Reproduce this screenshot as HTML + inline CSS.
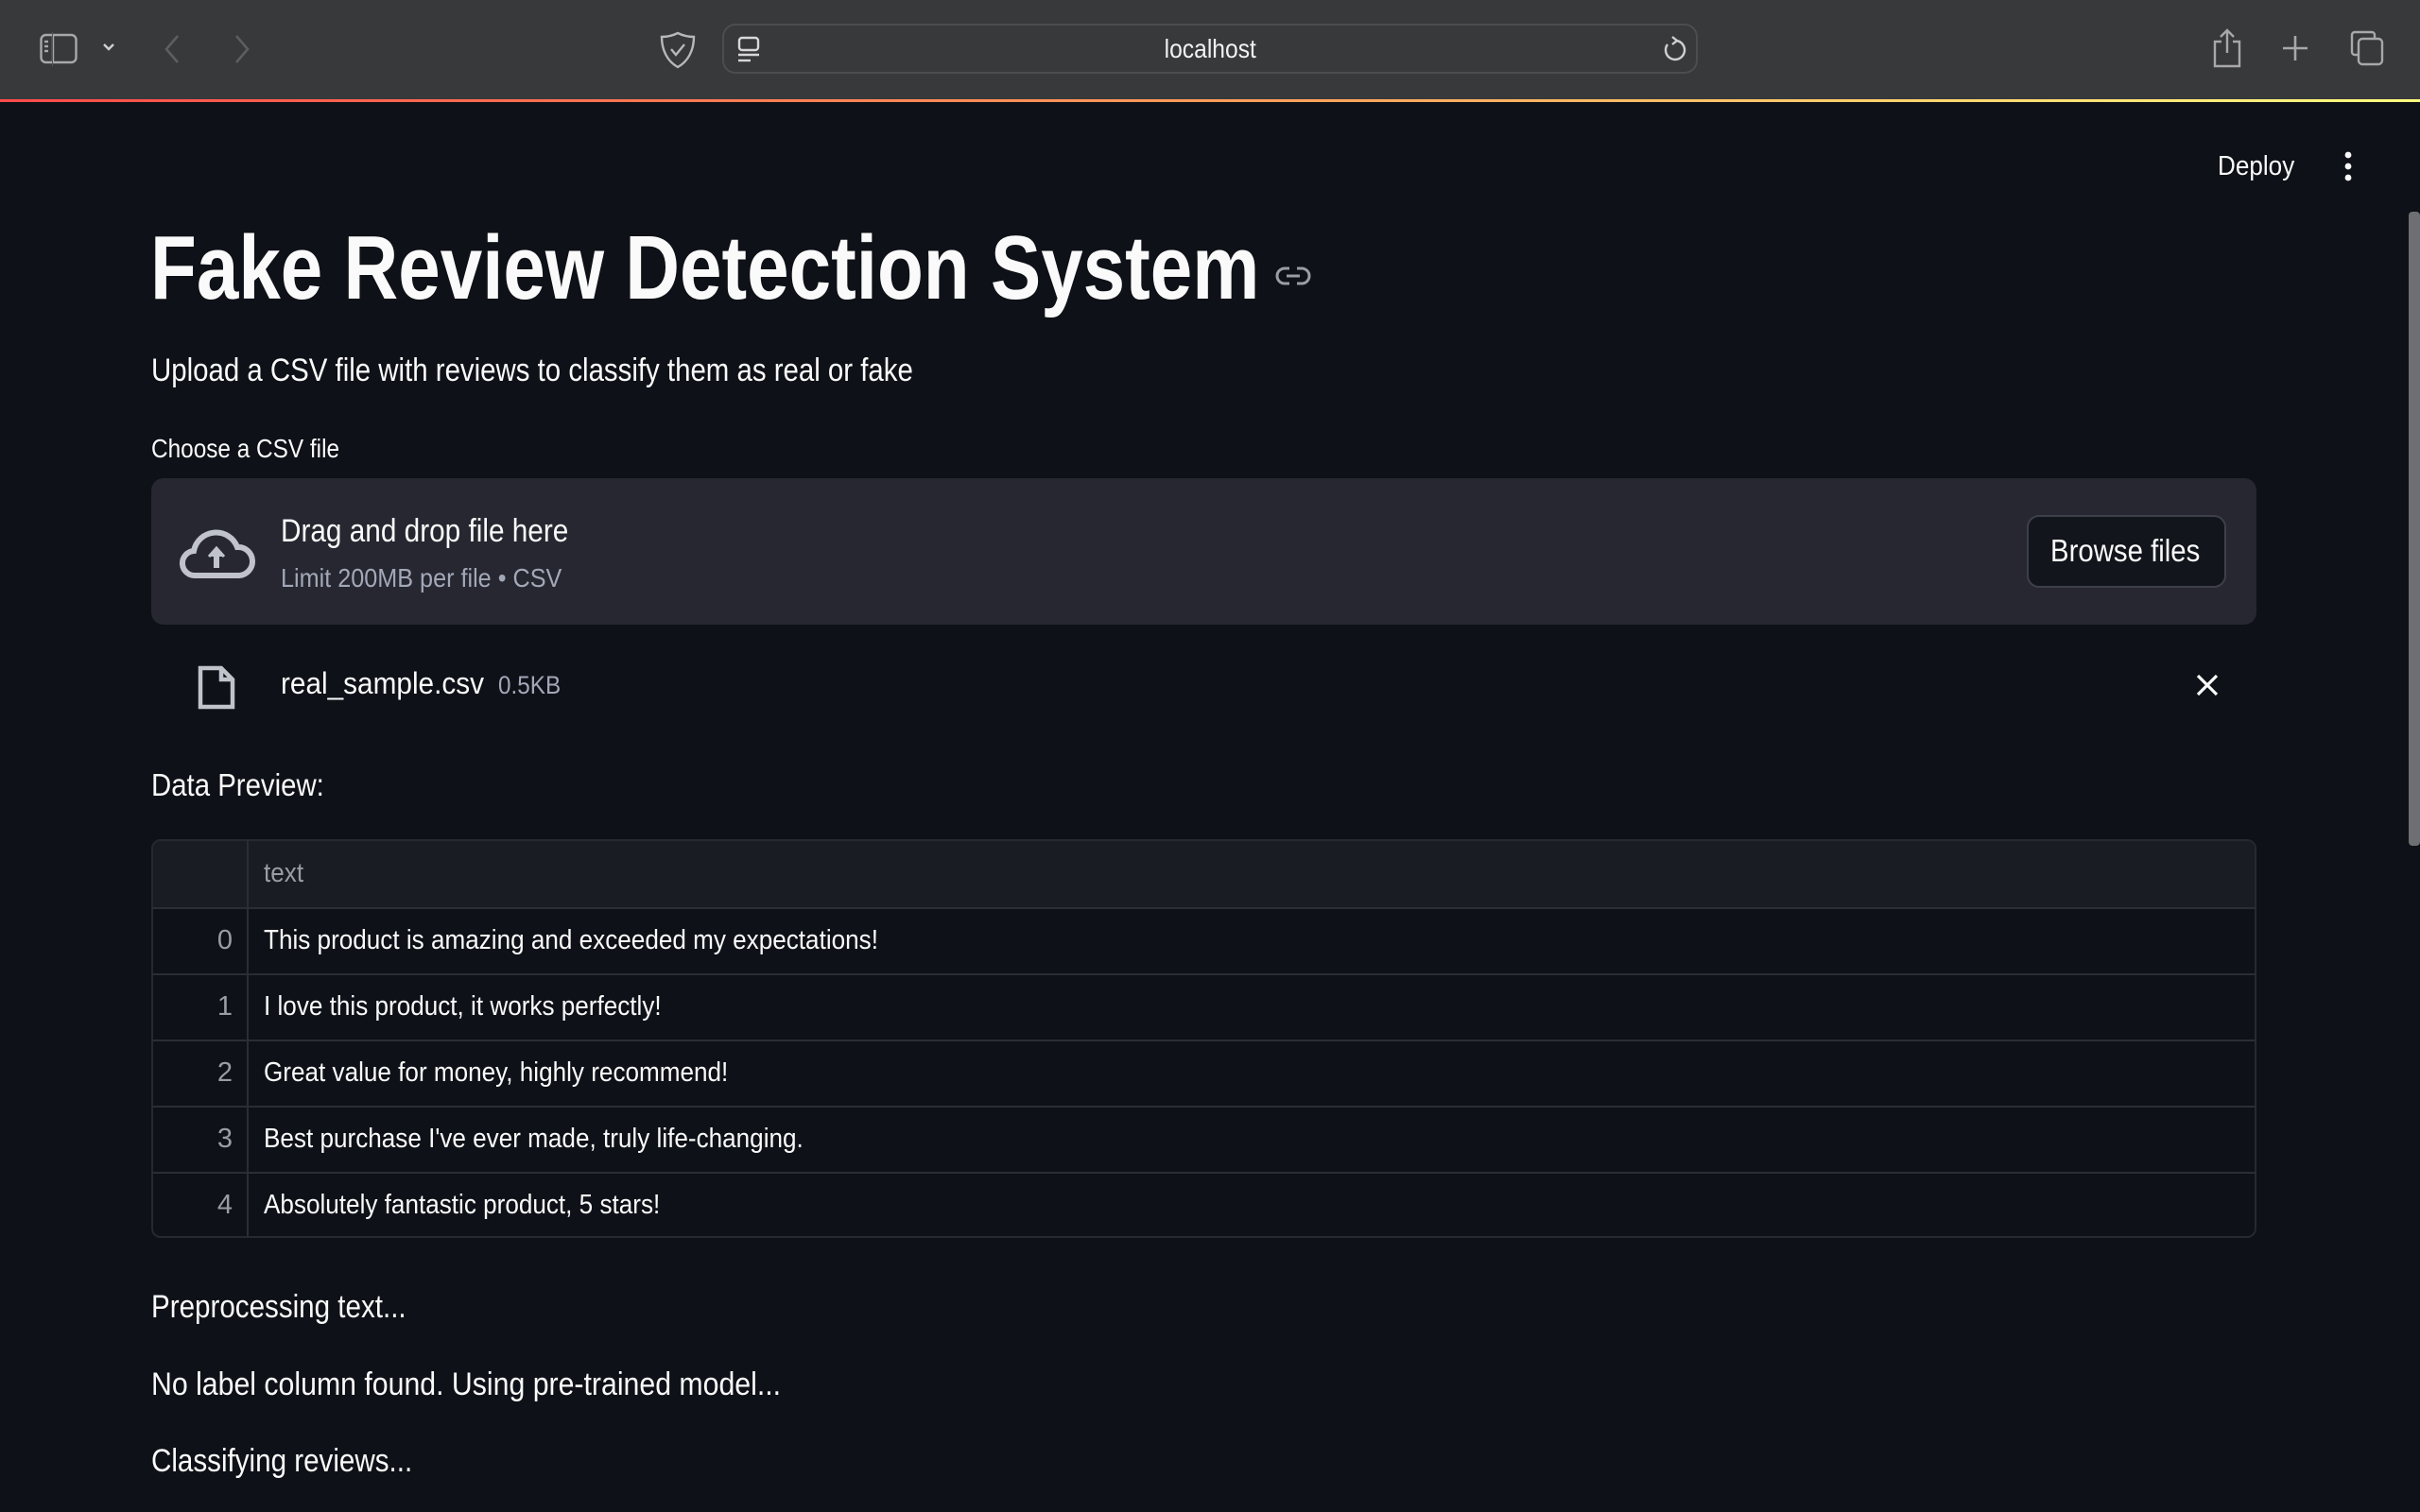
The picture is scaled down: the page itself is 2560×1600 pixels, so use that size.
<!DOCTYPE html>
<html><head><meta charset="utf-8"><style>
*{margin:0;padding:0;box-sizing:border-box}
body{width:2560px;height:1600px;background:#0e1117;overflow:hidden;position:relative;font-family:"Liberation Sans",sans-serif;color:#fafafa}
.a{position:absolute;white-space:nowrap}
.t{display:inline-block;transform:scaleX(.88);transform-origin:left center}
.bar{position:absolute;left:0;top:0;width:2560px;height:105px;background:#38393b}
.grad{position:absolute;left:0;top:105px;width:2560px;height:3px;background:linear-gradient(90deg,#ff4b4b,#ffa45c 55%,#fffd80)}
svg{position:absolute;overflow:visible}
.row{position:absolute;left:160px;width:2227px;height:1px;background:#2b2d36}
.r{font-size:29px;line-height:34px}
.r .t{transform:scaleX(.9)}
</style></head><body>
<div class="bar"></div>
<div class="grad"></div>
<svg style="left:42px;top:35px" width="40" height="32" viewBox="0 0 40 32" fill="none" stroke="#a8a8aa" stroke-width="2.4"><rect x="1.5" y="2" width="37" height="29" rx="5"/><line x1="14" y1="2" x2="14" y2="31"/><line x1="5" y1="9" x2="9" y2="9"/><line x1="5" y1="14" x2="9" y2="14"/><line x1="5" y1="19" x2="9" y2="19"/></svg>
<div class="a" style="left:55px;top:34px;width:1px;height:36px;background:#555"></div>
<svg style="left:108px;top:45px" width="14" height="10" viewBox="0 0 14 10" fill="none" stroke="#d0d0d2" stroke-width="2.4"><path d="M2 2l5 5 5-5"/></svg>
<svg style="left:170px;top:36px" width="24" height="32" viewBox="0 0 24 32" fill="none" stroke="#5d5e60" stroke-width="2.6"><path d="M18 2L6 16l12 14"/></svg>
<svg style="left:244px;top:36px" width="24" height="32" viewBox="0 0 24 32" fill="none" stroke="#5d5e60" stroke-width="2.6"><path d="M6 2l12 14L6 30"/></svg>
<svg style="left:698px;top:33px" width="38" height="40" viewBox="0 0 38 40" fill="none" stroke="#b8b8ba" stroke-width="2.4"><path d="M19 2c6 3 12 4 17 4 0 14-6 26-17 32C8 32 2 20 2 6c5 0 11-1 17-4z"/><path d="M12 19l5 6 9-11"/></svg>
<div class="a" style="left:764px;top:25px;width:1032px;height:53px;border:2px solid #4c4d50;border-radius:14px;background:#38393b"></div>
<svg style="left:780px;top:38px" width="24" height="30" viewBox="0 0 24 30" fill="none" stroke="#d8d8da" stroke-width="2.4"><rect x="2" y="2" width="20" height="13" rx="3"/><line x1="1" y1="20" x2="23" y2="20"/><line x1="1" y1="26" x2="14" y2="26"/></svg>
<div class="a" style="left:1180px;top:33px;width:200px;text-align:center;font-size:28px;line-height:38px;color:#f2f2f2"><span class="t" style="transform-origin:center">localhost</span></div>
<svg style="left:1758px;top:38px" width="26" height="30" viewBox="0 0 26 30" fill="none" stroke="#d0d0d2" stroke-width="2.4"><path d="M15 5a10 10 0 1 1-9 4"/><path d="M11 1l5 4-5 4"/></svg>
<svg style="left:2340px;top:30px" width="32" height="42" viewBox="0 0 32 42" fill="none" stroke="#a8a8aa" stroke-width="2.4"><path d="M10 14H3v26h26V14h-7"/><path d="M16 26V2M9 9l7-7 7 7"/></svg>
<svg style="left:2414px;top:37px" width="28" height="28" viewBox="0 0 28 28" stroke="#a8a8aa" stroke-width="2.6"><path d="M14 1v26M1 14h26"/></svg>
<svg style="left:2486px;top:32px" width="36" height="38" viewBox="0 0 36 38" fill="none" stroke="#a8a8aa" stroke-width="2.4"><path d="M8 26H5a3 3 0 0 1-3-3V5a3 3 0 0 1 3-3h18a3 3 0 0 1 3 3v3"/><rect x="9" y="9" width="25" height="27" rx="4"/></svg>
<div class="a" style="left:2346px;top:156px;font-size:29px;line-height:40px"><span class="t" style="transform:scaleX(.9)">Deploy</span></div>
<svg style="left:2477px;top:160px" width="14" height="32" viewBox="0 0 14 32" fill="#fafafa"><circle cx="7" cy="4" r="3.4"/><circle cx="7" cy="16" r="3.4"/><circle cx="7" cy="28" r="3.4"/></svg>
<div class="a" style="left:2548px;top:224px;width:12px;height:671px;background:#6e6f73;border-radius:4px"></div>
<div class="a" style="left:159px;top:228px;font-size:96px;line-height:112px;font-weight:bold"><span class="t" style="transform:scaleX(.833)">Fake Review Detection System</span></div>
<svg style="left:1350px;top:280px" width="36" height="24" viewBox="0 0 36 24" fill="none" stroke="#9a9ca6" stroke-width="3"><path d="M14 4H9a8 8 0 0 0 0 16h5M22 4h5a8 8 0 0 1 0 16h-5M11 12h14"/></svg>
<div class="a" style="left:160px;top:372px;font-size:34px;line-height:40px"><span class="t" style="transform:scaleX(.865)">Upload a CSV file with reviews to classify them as real or fake</span></div>
<div class="a" style="left:160px;top:458px;font-size:28px;line-height:34px"><span class="t" style="transform:scaleX(.87)">Choose a CSV file</span></div>
<div class="a" style="left:160px;top:506px;width:2227px;height:155px;background:#262730;border-radius:13px"></div>
<svg style="left:191px;top:557px" width="76" height="56" viewBox="0 0 76 56" fill="none" stroke="#c0c2cc" stroke-width="6"><path d="M20 52H16A13 13 0 0 1 14 26 24 24 0 0 1 60 22 15 15 0 0 1 62 52H20z"/><path d="M38 44V26" stroke-width="6"/><path d="M30 32l8-9 8 9" fill="#c0c2cc" stroke-width="3"/></svg>
<div class="a" style="left:297px;top:542px;font-size:34px;line-height:40px"><span class="t" style="transform:scaleX(.875)">Drag and drop file here</span></div>
<div class="a" style="left:297px;top:595px;font-size:28px;line-height:34px;color:#a3a8b8"><span class="t" style="transform:scaleX(.9)">Limit 200MB per file • CSV</span></div>
<div class="a" style="left:2144px;top:545px;width:211px;height:77px;background:#13151c;border:2px solid #3d3f4a;border-radius:13px"></div>
<div class="a" style="left:2169px;top:563px;font-size:33px;line-height:40px"><span class="t" style="transform:scaleX(.89)">Browse files</span></div>
<svg style="left:209px;top:704px" width="40" height="47" viewBox="0 0 40 47" fill="none" stroke="#c0c2cc" stroke-width="4.5"><path d="M3 3h22l12 12v29H3z"/><path d="M25 3v12h12"/></svg>
<div class="a" style="left:297px;top:704px;font-size:32px;line-height:38px"><span class="t" style="transform:scaleX(.93)">real_sample.csv</span></div>
<div class="a" style="left:527px;top:708px;font-size:27px;line-height:34px;color:#a3a8b8"><span class="t" style="transform:scaleX(.9)">0.5KB</span></div>
<svg style="left:2323px;top:713px" width="24" height="24" viewBox="0 0 24 24" stroke="#fafafa" stroke-width="3.2"><path d="M2 2l20 20M22 2L2 22"/></svg>
<div class="a" style="left:160px;top:812px;font-size:33px;line-height:38px"><span class="t" style="transform:scaleX(.89)">Data Preview:</span></div>
<div class="a" style="left:160px;top:888px;width:2227px;height:422px;border:2px solid #272932;border-radius:10px;overflow:hidden"><div style="height:71px;background:#1a1c24"></div></div>
<div class="a" style="left:261px;top:889px;width:2px;height:420px;background:#2b2d36"></div>
<div class="row" style="top:960px;height:2px"></div>
<div class="row" style="top:1030px;height:2px"></div>
<div class="row" style="top:1100px;height:2px"></div>
<div class="row" style="top:1170px;height:2px"></div>
<div class="row" style="top:1240px;height:2px"></div>
<div class="a r" style="left:279px;top:907px;color:#9a9ca6"><span class="t">text</span></div>
<div class="a r" style="left:200px;top:978px;width:46px;text-align:right;color:#9a9ca6">0</div>
<div class="a r" style="left:200px;top:1048px;width:46px;text-align:right;color:#9a9ca6">1</div>
<div class="a r" style="left:200px;top:1118px;width:46px;text-align:right;color:#9a9ca6">2</div>
<div class="a r" style="left:200px;top:1188px;width:46px;text-align:right;color:#9a9ca6">3</div>
<div class="a r" style="left:200px;top:1258px;width:46px;text-align:right;color:#9a9ca6">4</div>
<div class="a r" style="left:279px;top:978px"><span class="t">This product is amazing and exceeded my expectations!</span></div>
<div class="a r" style="left:279px;top:1048px"><span class="t">I love this product, it works perfectly!</span></div>
<div class="a r" style="left:279px;top:1118px"><span class="t">Great value for money, highly recommend!</span></div>
<div class="a r" style="left:279px;top:1188px"><span class="t">Best purchase I've ever made, truly life-changing.</span></div>
<div class="a r" style="left:279px;top:1258px"><span class="t">Absolutely fantastic product, 5 stars!</span></div>
<div class="a" style="left:160px;top:1363px;font-size:34px;line-height:40px"><span class="t" style="transform:scaleX(.87)">Preprocessing text...</span></div>
<div class="a" style="left:160px;top:1445px;font-size:34px;line-height:40px"><span class="t" style="transform:scaleX(.89)">No label column found. Using pre-trained model...</span></div>
<div class="a" style="left:160px;top:1526px;font-size:34px;line-height:40px"><span class="t" style="transform:scaleX(.87)">Classifying reviews...</span></div>
</body></html>
